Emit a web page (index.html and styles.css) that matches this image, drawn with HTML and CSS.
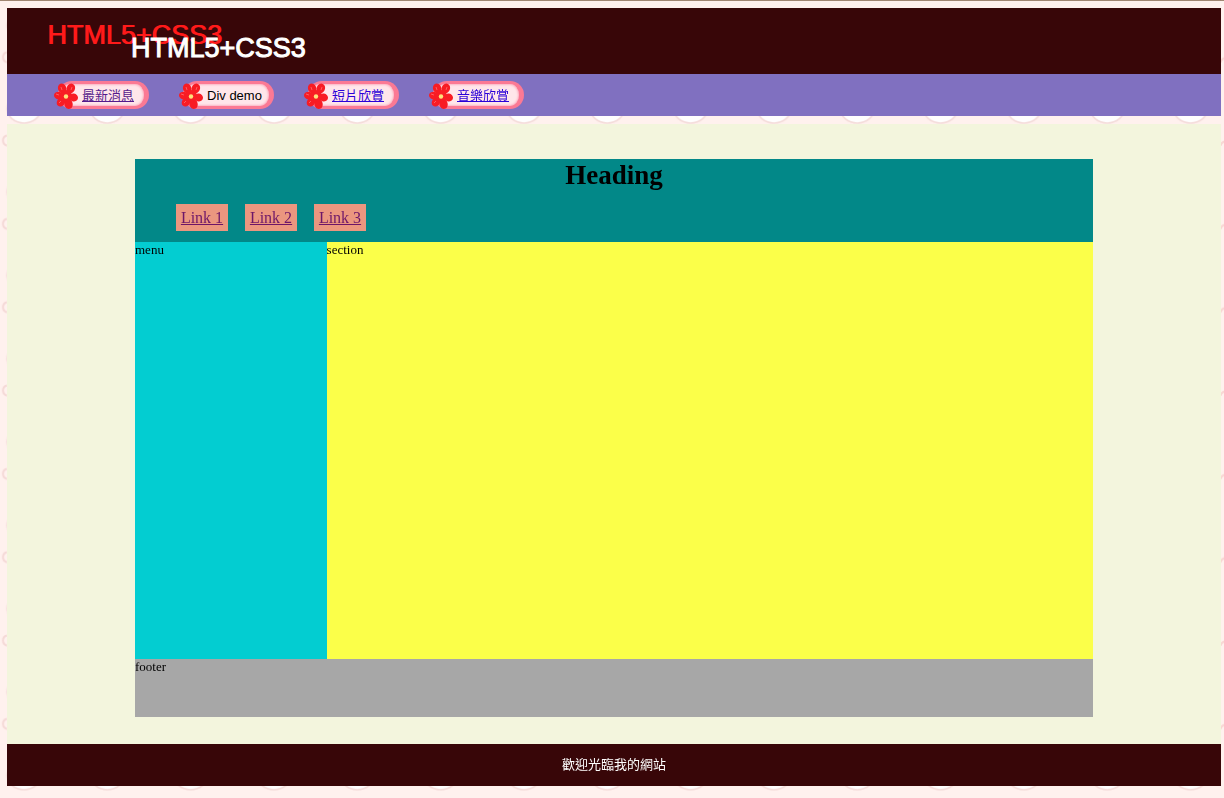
FILE: index.html
```
<!DOCTYPE html>
<html lang="zh-Hant">
<head>
<meta charset="utf-8">
<meta name="viewport" content="width=device-width, initial-scale=1">
<title>HTML5+CSS3</title>
<link rel="stylesheet" href="styles.css">
</head>
<body>
<svg class="wallpaper" aria-hidden="true">
  <defs>
    <pattern id="bubbles" width="83.33" height="83.33" patternUnits="userSpaceOnUse" x="-18" y="64.6">
      <ellipse cx="42" cy="44" rx="17" ry="14.5" fill="#fffefe" stroke="#f4dbd9" stroke-width="1.5"/>
      <path d="M25 71q-4 1-4 5t4 5" fill="none" stroke="#f5d9d7" stroke-width="2"/>
      <path d="M77 85q-5 0-5 4M77 77q-4 0-5 4" fill="none" stroke="#f8d6d3" stroke-width="2"/>
    </pattern>
    <symbol id="flower" viewBox="0 0 24 28">
      <g fill="#f81c24">
        <ellipse cx="8.2" cy="6.5" rx="4.2" ry="5" transform="rotate(-22 8.2 6.5)"/>
        <ellipse cx="16.8" cy="6.5" rx="4.2" ry="5" transform="rotate(25 16.8 6.5)"/>
        <ellipse cx="19.5" cy="15.5" rx="4.5" ry="4" transform="rotate(8 19.5 15.5)"/>
        <ellipse cx="14.5" cy="22" rx="4.2" ry="5" transform="rotate(-15 14.5 22)"/>
        <ellipse cx="7" cy="20" rx="4" ry="4.8" transform="rotate(38 7 20)"/>
        <ellipse cx="4.6" cy="13.5" rx="4.6" ry="3.8" transform="rotate(12 4.6 13.5)"/>
        <circle cx="12" cy="14" r="6"/>
      </g>
      <path d="M7 5l1 3M18 5l-1 3M2 12l3 1M5 21l2-2" stroke="#ff5c60" stroke-width="1" fill="none"/>
      <circle cx="12" cy="14.5" r="2.2" fill="#ffe07a"/>
    </symbol>
  </defs>
  <rect width="100%" height="100%" fill="url(#bubbles)"/>
</svg>
<div class="page">
  <header class="banner"><h1 class="banner-title">HTML5+CSS3</h1></header>
  <nav class="site-nav">
    <span class="pill"><svg class="flower" aria-hidden="true"><use href="#flower"/></svg><a class="visited" href="#news">最新消息</a></span>
    <span class="pill"><svg class="flower" aria-hidden="true"><use href="#flower"/></svg><span>Div demo</span></span>
    <span class="pill"><svg class="flower" aria-hidden="true"><use href="#flower"/></svg><a href="#video">短片欣賞</a></span>
    <span class="pill"><svg class="flower" aria-hidden="true"><use href="#flower"/></svg><a href="#music">音樂欣賞</a></span>
  </nav>
  <main class="content">
    <div class="demo">
      <div class="demo-header">
        <h2 class="demo-title">Heading</h2>
        <div class="demo-links">
          <a class="demo-link" href="#link1">Link 1</a>
          <a class="demo-link" href="#link2">Link 2</a>
          <a class="demo-link" href="#link3">Link 3</a>
        </div>
      </div>
      <div class="demo-body">
        <aside class="demo-menu">menu</aside>
        <section class="demo-section">section</section>
      </div>
      <div class="demo-footer">footer</div>
    </div>
  </main>
  <footer class="site-footer">歡迎光臨我的網站</footer>
</div>
</body>
</html>
```
FILE: styles.css
```
* { box-sizing: border-box; }
body {
  margin: 0;
  min-height: 100vh;
  background: #fff1ee;
  border-top: 1px solid #a08672;
  font: 13px/16px "Liberation Serif", "Noto Sans CJK TC", serif;
  color: #000;
}
.wallpaper {
  position: fixed;
  inset: 0;
  z-index: -1;
  width: 100%;
  height: 100%;
}
.page {
  min-height: calc(100vh - 1px);
  padding: 7px 3px 12px 7px;
  display: flex;
  flex-direction: column;
}
.banner {
  background: #380608;
  padding: 24px 0 10px 124px;
}
.banner-title {
  margin: 0;
  font: normal 27px/32px "Liberation Sans", Arial, sans-serif;
  color: #fff;
  -webkit-text-stroke: 1px currentColor;
  text-shadow: -83px -13px 0 #ff1a1a, -84px -13px 0 #ff1a1a;
}
.site-nav {
  display: flex;
  flex-wrap: wrap;
  gap: 34px;
  padding: 7px 51px;
  background: #8070c0;
  font-family: "Liberation Sans", "Noto Sans CJK TC", sans-serif;
}
.pill {
  width: 91px;
  height: 28px;
  padding-top: 2px;
  display: flex;
  align-items: center;
  gap: 4px;
  white-space: nowrap;
  border: 3px solid #fb7994;
  border-right-width: 5px;
  border-left: 0;
  border-radius: 14px;
  background: #ffe6ea;
  box-shadow: inset 0 0 2px 1px #fbb4c3;
}
.flower {
  flex: none;
  width: 24px;
  height: 28px;
  margin-left: -4px;
}
.site-nav a { color: #2a00d8; }
.site-nav .visited { color: #551a8b; }
.content {
  flex: 1;
  display: flex;
  flex-direction: column;
  margin-top: 8px;
  padding: 35px 128px 27px;
  background: #f3f5dd;
}
.demo {
  flex: 1;
  display: flex;
  flex-direction: column;
}
.demo-header {
  padding-bottom: 11px;
  background: #028888;
}
.demo-title {
  margin: 0 0 13px;
  font-size: 27px;
  line-height: 32px;
  text-align: center;
}
.demo-links {
  display: flex;
  gap: 17px;
  padding-left: 41px;
}
.demo-link {
  min-width: 52px;
  padding: 4px 0;
  text-align: center;
  background: #eb967f;
  color: #6d1668;
  font-size: 16px;
  line-height: 19px;
}
.demo-body {
  flex: 1;
  display: grid;
  grid-template-columns: 1fr 4fr;
}
.demo-menu { background: #03cdd1; }
.demo-section { background: #fbff49; }
.demo-footer {
  height: 58px;
  background: #a7a7a7;
}
.site-footer {
  padding: 12px 0 14px;
  background: #380608;
  color: #fff;
  text-align: center;
  font-family: "Noto Sans CJK TC", sans-serif;
}
```
